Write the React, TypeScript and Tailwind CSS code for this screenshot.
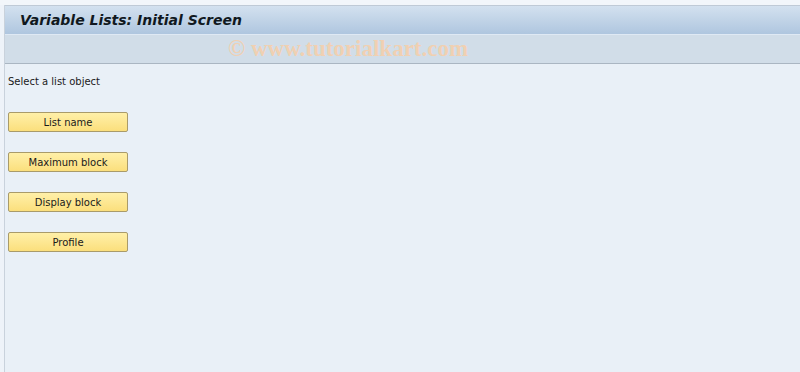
const BUTTONS = ["List name", "Maximum block", "Display block", "Profile"];

export default function App() {
  return (
    <div className="h-[372px] w-[800px] overflow-hidden bg-[#eef3f9]" style={{ fontFamily: "'DejaVu Sans', sans-serif" }}>
      <div className="h-[5px] bg-[#f2f6fa]" />
      <div className="ml-[4px] flex h-[367px] flex-col border-l border-[#c9d2dc]">
        <div className="flex h-[29px] items-center border-t border-[#bfcad6] bg-gradient-to-b from-[#d3e1ef] to-[#afc6df] pl-[15px]">
          <span className="text-[14px] font-bold italic text-[#101820]">
            Variable Lists: Initial Screen
          </span>
        </div>
        <div className="flex h-[30px] items-center border-t border-[#dfe9f4] border-b border-b-[#aab6c2] bg-[#d1dde8] pl-[223px]">
          <span className="text-[23px] font-bold text-[#f0d0b2]" style={{ fontFamily: "'Liberation Serif', serif" }}>
            © www.tutorialkart.com
          </span>
        </div>
        <div className="flex-1 bg-[#e9f0f7] pl-[3px]">
          <div className="mt-[11px] text-[10px] leading-[14px] text-[#1a1a1a]">
            Select a list object
          </div>
          <div className="mt-[23px] flex flex-col gap-[20px]">
            {BUTTONS.map((label) => (
              <div
                key={label}
                className="flex h-[20px] w-[120px] items-center justify-center rounded-[2px] border border-[#a99b6a] bg-gradient-to-b from-[#fff0a8] to-[#fbdf7c] pt-[1px] text-[10px] text-[#1a1a1a]"
              >
                {label}
              </div>
            ))}
          </div>
        </div>
      </div>
    </div>
  );
}
